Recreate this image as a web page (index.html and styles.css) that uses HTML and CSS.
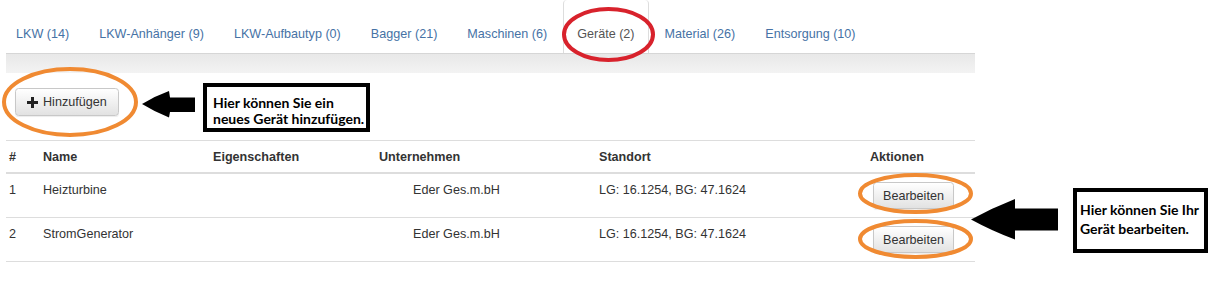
FILE: index.html
```html
<!DOCTYPE html>
<html lang="de">
<head>
<meta charset="utf-8">
<title>Geräte</title>
<link rel="stylesheet" href="styles.css">
</head>
<body>
<div class="page">
  <ul class="tabs">
    <li class="tab"><a class="tab-link">LKW (14)</a></li>
    <li class="tab"><a class="tab-link">LKW-Anhänger (9)</a></li>
    <li class="tab"><a class="tab-link">LKW-Aufbautyp (0)</a></li>
    <li class="tab"><a class="tab-link">Bagger (21)</a></li>
    <li class="tab"><a class="tab-link">Maschinen (6)</a></li>
    <li class="tab active"><a class="tab-link">Geräte (2)</a></li>
    <li class="tab"><a class="tab-link">Material (26)</a></li>
    <li class="tab"><a class="tab-link">Entsorgung (10)</a></li>
  </ul>
  <div class="panel">
    <div class="panel-heading"></div>
    <div class="panel-body">
      <button class="btn btn-add" type="button">
        <svg class="icon-plus" width="11" height="11" viewBox="0 0 11 11"><rect x="0" y="4" width="11" height="3"/><rect x="4" y="0" width="3" height="11"/></svg>
        <span>Hinzufügen</span>
      </button>
    </div>
    <table class="table">
      <colgroup>
        <col class="col-num"><col class="col-name"><col class="col-props"><col class="col-company"><col class="col-location"><col class="col-actions">
      </colgroup>
      <thead>
        <tr><th>#</th><th>Name</th><th>Eigenschaften</th><th>Unternehmen</th><th>Standort</th><th>Aktionen</th></tr>
      </thead>
      <tbody>
        <tr>
          <td>1</td><td>Heizturbine</td><td></td><td class="company">Eder Ges.m.bH</td><td>LG: 16.1254, BG: 47.1624</td>
          <td><button class="btn btn-edit" type="button">Bearbeiten</button></td>
        </tr>
        <tr>
          <td>2</td><td>StromGenerator</td><td></td><td class="company">Eder Ges.m.bH</td><td>LG: 16.1254, BG: 47.1624</td>
          <td><button class="btn btn-edit" type="button">Bearbeiten</button></td>
        </tr>
      </tbody>
    </table>
  </div>

  <svg class="annotations" width="1215" height="305" viewBox="0 0 1215 305">
    <ellipse class="ring-red" cx="608.5" cy="34.5" rx="44.5" ry="25.5"/>
    <ellipse class="ring-orange" cx="70" cy="102" rx="66" ry="33"/>
    <ellipse class="ring-orange" cx="915.5" cy="193.5" rx="55.5" ry="18.5"/>
    <ellipse class="ring-orange" cx="915.5" cy="239" rx="55.5" ry="18"/>
    <path class="arrow" d="M142 104 Q155 96 169 91 L170 97.5 L195 97.5 L195 112 L170 112 L169 117.5 Q155 112 142 104 Z"/>
    <path class="arrow" d="M971 219.5 Q992 208 1015 199 L1015 208.5 L1058 208.5 L1058 230.5 L1015 230.5 L1015 239.5 Q992 231 971 219.5 Z"/>
  </svg>
  <div class="callout callout-add">Hier können Sie ein<br>neues Gerät hinzufügen.</div>
  <div class="callout callout-edit">Hier können Sie Ihr<br>Gerät bearbeiten.</div>
</div>
</body>
</html>
```

FILE: styles.css
```css
* { box-sizing: border-box; }

html, body {
  margin: 0;
  padding: 0;
  background: #fff;
}

body {
  font-family: "Liberation Sans", Arial, sans-serif;
  font-size: 12.6px;
  line-height: 18px;
  color: #333;
}

.page {
  position: relative;
  width: 1215px;
  height: 305px;
  padding-left: 6px;
  overflow: hidden;
}

/* Tabs */
.tabs {
  list-style: none;
  margin: 0 0 0 -4px;
  padding: 0;
  height: 53px;
  display: flex;
  align-items: flex-end;
}

.tab {
  margin-right: 2px;
}

.tab-link {
  display: block;
  padding: 7px 13px 10px;
  line-height: 18px;
  color: #4672a5;
  border: 1px solid transparent;
  border-bottom: 0;
  border-radius: 4px 4px 0 0;
  white-space: nowrap;
}

.tab.active .tab-link {
  color: #555;
  background: #fff;
  border-color: #ddd;
  border-top: 0;
  padding-top: 25px;
}

/* Panel */
.panel {
  width: 969px;
}

.panel-heading {
  height: 20px;
  border-top: 1px solid #d6d6d6;
  background: linear-gradient(to bottom, #e8e8e8 0%, #f3f3f3 100%);
}

.panel-body {
  padding: 15px 0 24px 9px;
}

/* Buttons */
.btn {
  font: inherit;
  color: #333;
  display: inline-flex;
  align-items: center;
  border: 1px solid #c8c8c8;
  border-radius: 3.6px;
  background: linear-gradient(to bottom, #ffffff 0%, #e2e2e2 100%);
  box-shadow: inset 0 1px 0 rgba(255, 255, 255, .15), 0 1px 1px rgba(0, 0, 0, .075);
  margin: 0;
  cursor: pointer;
}

.btn-add {
  height: 28px;
  padding: 0 11px;
  gap: 5px;
}

.icon-plus {
  fill: #222;
  display: block;
}

.btn-edit {
  height: 27px;
  padding: 0 9px;
  margin-left: 3px;
  vertical-align: top;
}

/* Table */
.table {
  width: 969px;
  table-layout: fixed;
  border-collapse: separate;
  border-spacing: 0;
}

.col-num { width: 34px; }
.col-name { width: 170px; }
.col-props { width: 166px; }
.col-company { width: 220px; }
.col-location { width: 271px; }
.col-actions { width: 108px; }

.table th {
  text-align: left;
  font-weight: bold;
  padding: 7px 3px 6px;
  line-height: 18px;
  vertical-align: bottom;
  border-top: 1px solid #ddd;
  border-bottom: 2px solid #ddd;
  white-space: nowrap;
}

.table td {
  padding: 8px 3px;
  line-height: 16px;
  vertical-align: top;
  border-bottom: 1px solid #ddd;
  white-space: nowrap;
}

.table td.company {
  padding-left: 37px;
}

/* Annotations */
.annotations {
  position: absolute;
  left: 0;
  top: 0;
  pointer-events: none;
}

.ring-red {
  fill: none;
  stroke: #d8222c;
  stroke-width: 4;
}

.ring-orange {
  fill: none;
  stroke: #f08a32;
  stroke-width: 4;
}

.arrow {
  fill: #000;
}

.callout {
  position: absolute;
  border: 4px solid #000;
  background: #fff;
  font-family: Lato, "Liberation Sans", sans-serif;
  font-weight: 700;
  font-size: 14px;
  color: #000;
  white-space: nowrap;
}

.callout-add {
  left: 203px;
  top: 83px;
  width: 167px;
  height: 49px;
  padding: 8px 2px 0 6px;
  line-height: 16px;
}

.callout-edit {
  left: 1073px;
  top: 188px;
  width: 135px;
  height: 65px;
  padding: 8px 0 0 3px;
  line-height: 19px;
}
```
